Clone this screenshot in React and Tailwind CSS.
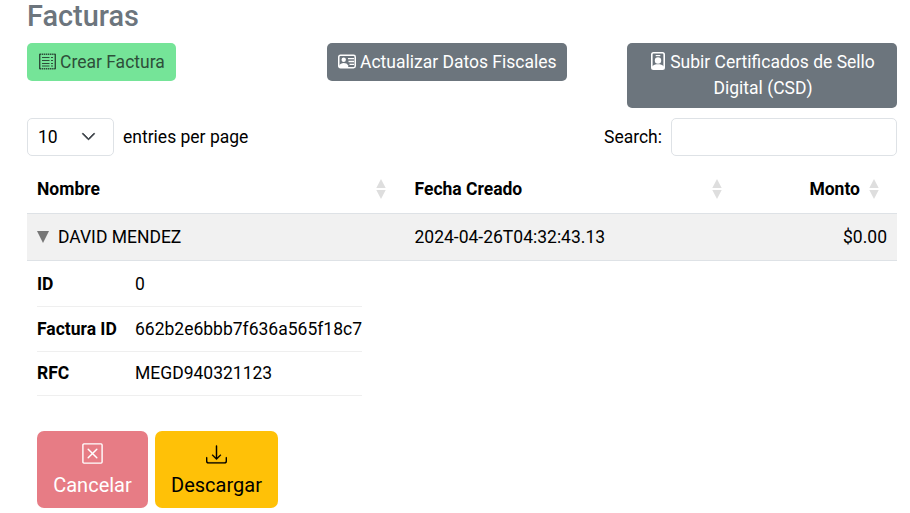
import { BsDownload, BsChevronDown } from "react-icons/bs";

const details = [
  { label: "ID", value: "0", row: "h-[46px] pt-px" },
  { label: "Factura ID", value: "662b2e6bbb7f636a565f18c7", row: "h-[45px]" },
  { label: "RFC", value: "MEGD940321123", row: "h-[44px] pb-px" },
];

function SortIcon() {
  return (
    <svg className="h-5 w-2.5 shrink-0 text-[#dedede]" viewBox="0 0 10 20" fill="currentColor">
      <path d="M5 0 9.700 9H.3zM5 20 9.700 11H.3z" />
    </svg>
  );
}

function ReceiptIcon() {
  return (
    <svg className="mb-0.5 h-[17px] w-[17px] shrink-0" viewBox="0 0 17 17" fill="none" stroke="currentColor">
      <path d="M.7 1v15M16.300 1v15" strokeWidth="1.4" />
      <path d="M.5 1.300h16M.5 15.700h16" strokeWidth="1.600" strokeDasharray="1.500 .6" />
      <path d="M3 4.500h7.500M3 7.500h7.500M3 10.500h7.500M3 13h7.500M12 4.500h2M12 7.500h2M12 10.500h2M12 13h2" strokeWidth="1.200" />
    </svg>
  );
}

function VcardIcon() {
  return (
    <svg className="mb-0.5 h-[15px] w-[18px] shrink-0" viewBox="0 0 18 15" fill="none" stroke="currentColor">
      <rect x=".75" y="1.250" width="16.500" height="12.500" rx="1.700" strokeWidth="1.500" />
      <circle cx="5.700" cy="5.800" r="2.200" fill="currentColor" stroke="none" />
      <path d="M1 14v-2.200C2 9.800 3.700 9 5.700 9s3.800.8 4.500 2.600V14z" fill="currentColor" stroke="none" />
      <path d="M10 4.600h6M10.500 7.500H16M11.500 10.400H16" strokeWidth="1.300" />
    </svg>
  );
}

function BadgeIcon() {
  return (
    <svg className="mr-[5px] inline h-[18px] w-[14px] align-[-2px]" viewBox="0 0 14 18" fill="none" stroke="currentColor">
      <rect x=".8" y=".8" width="12.400" height="16.400" rx="1.700" strokeWidth="1.600" />
      <path d="M4.700 3.600h4.600" strokeWidth="1.200" />
      <circle cx="7" cy="8.500" r="3.200" fill="currentColor" stroke="none" />
      <path d="M1 17v-2.600C2.500 12.900 4.400 12.300 7 12.300s4.500.6 6 2.100V17z" fill="currentColor" stroke="none" />
    </svg>
  );
}

function XSquareIcon() {
  return (
    <svg className="size-[21px]" viewBox="0 0 21 21" fill="none" stroke="currentColor">
      <rect x=".9" y=".9" width="19.200" height="19.200" rx="1" strokeWidth="1.400" />
      <path d="m6.200 6.200 8.600 8.600m0-8.600-8.600 8.600" strokeWidth="1.500" strokeLinecap="round" />
    </svg>
  );
}

export default function App() {
  return (
    <main className="h-[513px] w-[910px] overflow-hidden bg-white pl-[27px] pr-[13px] font-['Roboto',sans-serif] text-[17.5px] leading-[26px] text-black">
      <h1 className="h-[43px] text-[28.9px] font-medium leading-[32px] text-[#6c757d]">Facturas</h1>

      <div className="grid h-[75px] grid-cols-[300px_300px_270px] items-start">
        <button className="flex h-[38px] w-[149px] items-center gap-1 whitespace-nowrap rounded-[5px] bg-[#75e498] pl-3 text-[#2e4f3a]">
          <ReceiptIcon />
          <span>Crear Factura</span>
        </button>
        <button className="flex h-[38px] w-[240px] items-center gap-1 whitespace-nowrap rounded-[5px] bg-[#6c757d] pl-[11px] text-white">
          <VcardIcon />
          <span>Actualizar Datos Fiscales</span>
        </button>
        <button className="h-[65px] rounded-[5px] bg-[#6c757d] pb-[2px] pl-[13px] pr-[11px] text-center text-white">
          <BadgeIcon />
          Subir Certificados de Sello Digital (CSD)
        </button>
      </div>

      <div className="flex h-[38px] items-center justify-between">
        <div className="flex items-center">
          <div className="flex h-[38px] w-[87px] items-center justify-between rounded-[5px] border border-[#dee2e6] pl-2.5 pr-[17px]">
            <span>10</span>
            <BsChevronDown className="mb-px size-[15px] text-[#343a40]" strokeWidth="0.9" />
          </div>
          <span className="ml-[9px]">entries per page</span>
        </div>
        <label className="flex items-center gap-[9px]">
          Search:
          <input className="h-[38px] w-[226px] rounded-[5px] border border-[#dee2e6] px-3 outline-none" />
        </label>
      </div>

      <section className="mt-[7px]">
        <div className="grid h-[51px] grid-cols-[378px_336px_156px] items-center border-b border-[#dee2e6] pt-px font-bold">
          <div className="flex items-center justify-between pl-2.5 pr-[19px]">Nombre<SortIcon /></div>
          <div className="flex items-center justify-between pl-[9.500px] pr-[19px]">Fecha Creado<SortIcon /></div>
          <div className="flex items-center justify-end gap-[9px] pr-[18px]">Monto<SortIcon /></div>
        </div>
        <div className="grid h-[47px] grid-cols-[378px_336px_156px] items-center border-b border-[#dee2e6] bg-[#f1f1f1]">
          <div className="flex items-center gap-[9px] pl-2.5">
            <svg className="h-3 w-3" viewBox="0 0 12 12" fill="#777777"><path d="M0 0h12L6 12z" /></svg>
            DAVID MENDEZ
          </div>
          <div className="pl-[9.500px]">2024-04-26T04:32:43.13</div>
          <div className="pr-2.5 text-right">$0.00</div>
        </div>
      </section>

      <dl className="ml-2.5 w-[325px]">
        {details.map(({ label, value, row }) => (
          <div key={label} className={`flex ${row} items-center border-b border-[#efefef]`}>
            <dt className="w-[98px] shrink-0 font-bold">{label}</dt>
            <dd>{value}</dd>
          </div>
        ))}
      </dl>

      <div className="ml-2.5 mt-[35px] flex gap-[7px] text-[20px] leading-[30px]">
        <button className="flex h-[77px] w-[111px] flex-col items-center rounded-[7px] bg-[#e77c85] pt-3 text-white">
          <XSquareIcon />
          <span className="mt-[6px]">Cancelar</span>
        </button>
        <button className="flex h-[77px] w-[123px] flex-col items-center rounded-[7px] bg-[#ffc107] pt-[13px] text-black">
          <BsDownload className="size-[21px]" strokeWidth="0.1" />
          <span className="mt-[5px]">Descargar</span>
        </button>
      </div>
    </main>
  );
}
